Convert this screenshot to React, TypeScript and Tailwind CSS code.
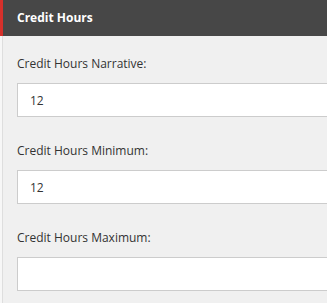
const fields = [
  { label: "Credit Hours Narrative:", value: "12" },
  { label: "Credit Hours Minimum:", value: "12" },
  { label: "Credit Hours Maximum:", value: "" },
];

export default function App() {
  return (
    <div
      className="h-[303px] w-[327px] overflow-hidden bg-[#f7f7f7]"
      style={{ fontFamily: '"Open Sans", "Liberation Sans", sans-serif' }}
    >
      <div className="flex h-[36px] items-center border-l-[3px] border-[#d6302b] bg-[#474747] pl-[14px]">
        <h2 className="text-[12px] font-bold text-white">Credit Hours</h2>
      </div>
      <div className="ml-[2px] h-full border-l border-[#dedede] bg-[#f0f0f0] pl-[14px] pt-[19px]">
        {fields.map((f) => (
          <div key={f.label} className="mb-[25px]">
            <label className="mb-[10px] block text-[12px] leading-[18px] text-[#333333]">
              {f.label}
            </label>
            <input
              type="text"
              defaultValue={f.value}
              className="h-[34px] w-[330px] border border-[#cccccc] bg-white px-[12px] text-[12px] text-[#333333] outline-none"
            />
          </div>
        ))}
      </div>
    </div>
  );
}
